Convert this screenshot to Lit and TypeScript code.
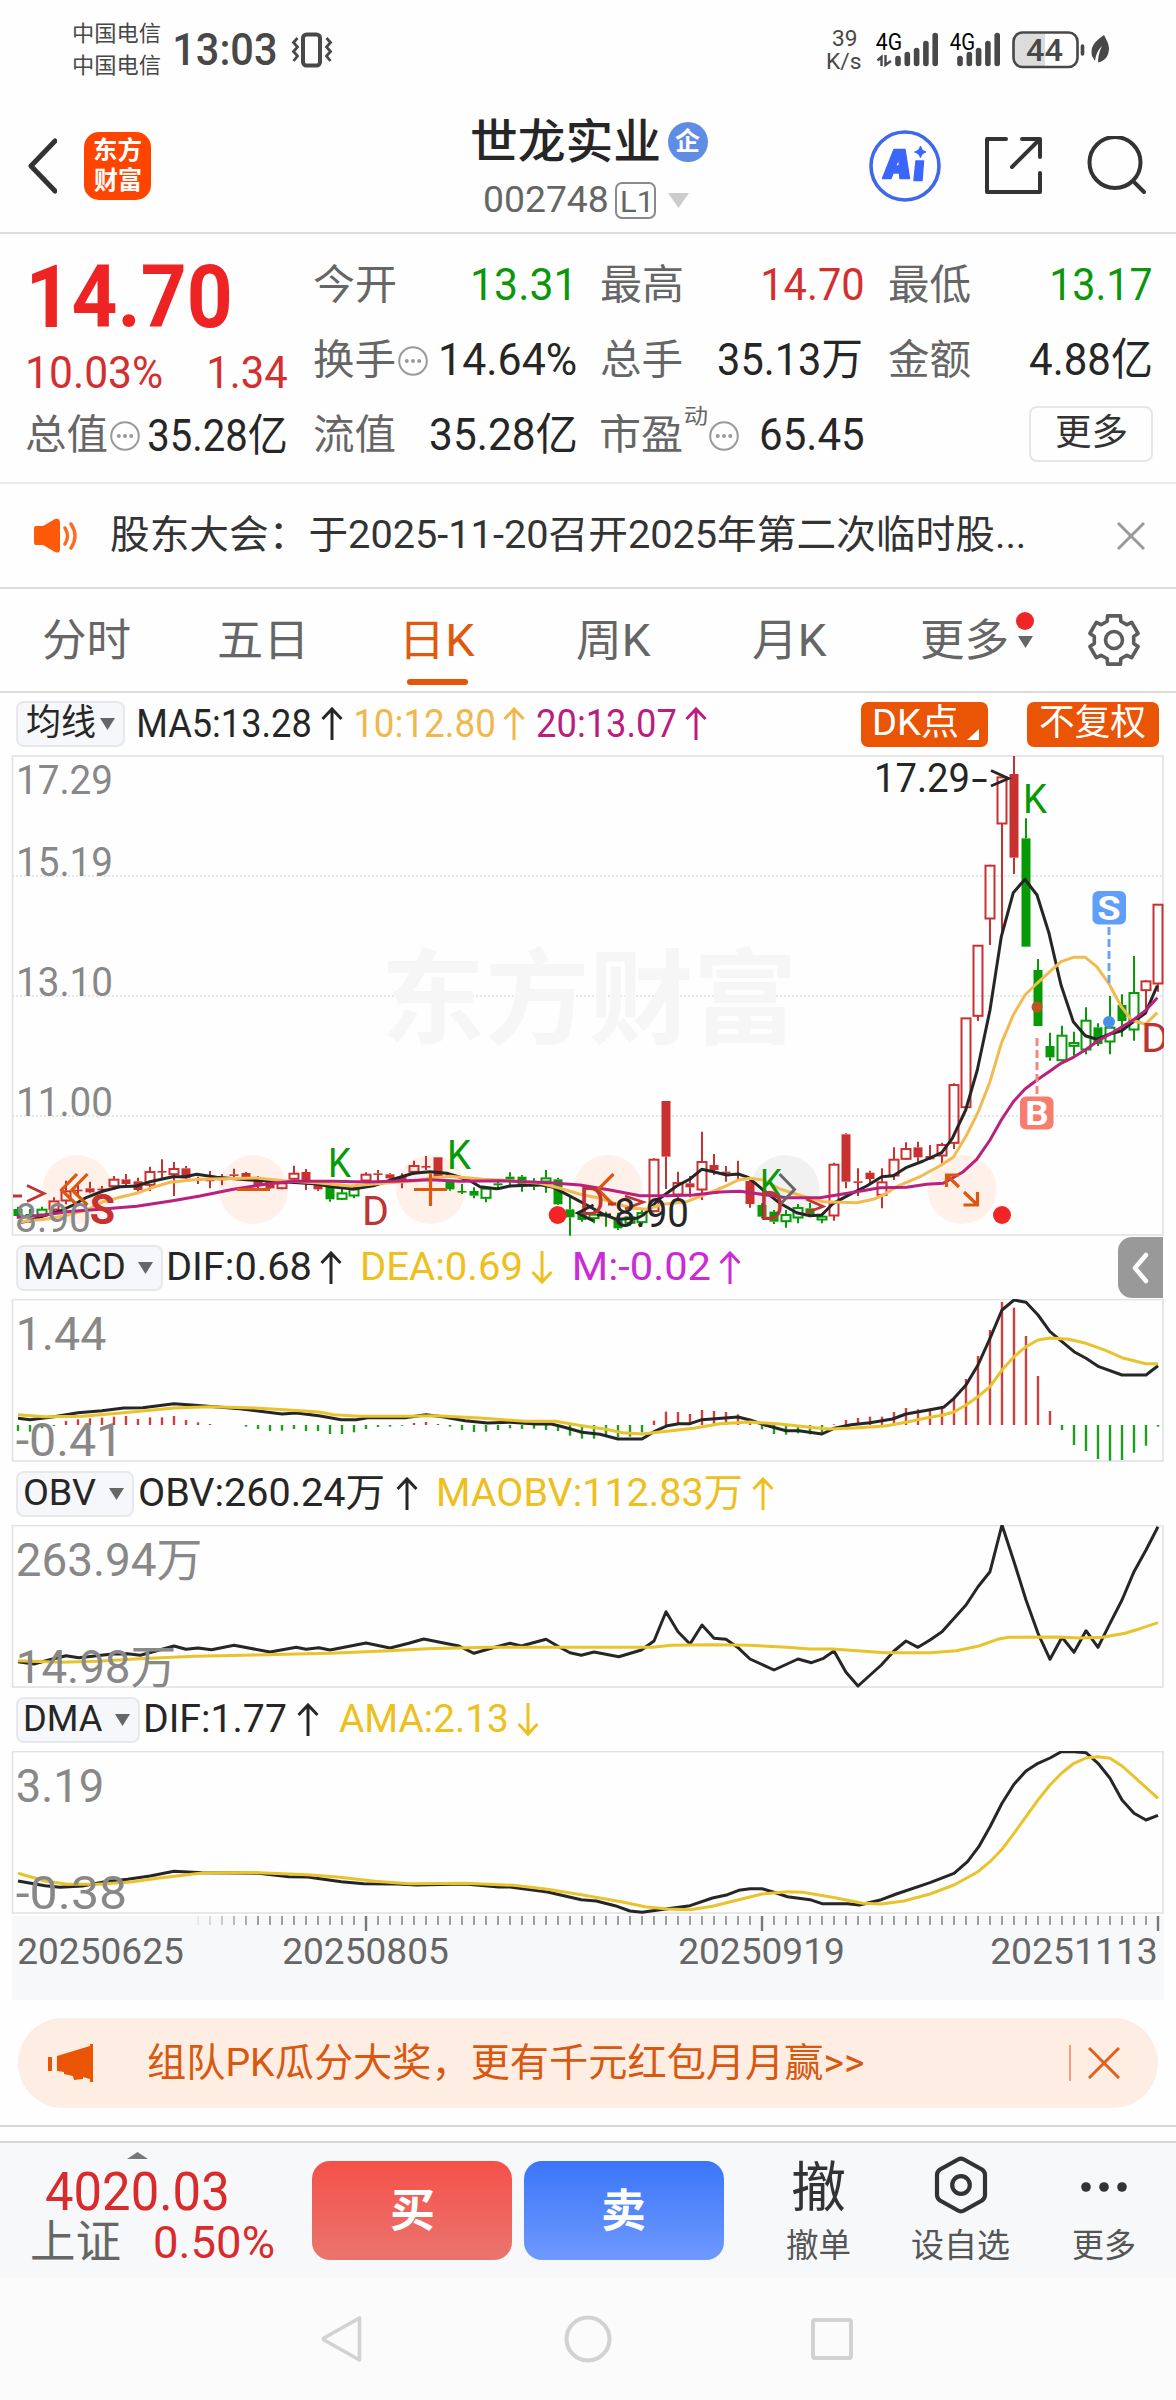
import { LitElement, html, svg, css } from "lit";
import { customElement, property } from "lit/decorators.js";

const FONT = css`Roboto, "Noto Sans CJK SC", sans-serif`;

/* A single line of text whose ink fills exactly `w` pixels. */
@customElement("fit-text")
export class FitText extends LitElement {
  @property({ type: Number }) w = 0;
  @property({ type: Number }) lead = 0;
  @property() text = "";

  static styles = css`
    :host { display: block; flex: none; white-space: nowrap; line-height: 1.2; }
    .ink { display: inline-block; transform-origin: 0 50%; vertical-align: top; }
  `;

  updated() {
    const ink = this.renderRoot.querySelector(".ink") as HTMLElement;
    const cs = getComputedStyle(this);
    const ctx = document.createElement("canvas").getContext("2d")!;
    ctx.font = `${cs.fontWeight} ${cs.fontSize} ${cs.fontFamily}`;
    const m = ctx.measureText(this.text);
    const natural = m.actualBoundingBoxLeft + m.actualBoundingBoxRight;
    const k = this.w / natural;
    ink.style.transform = `translateX(${m.actualBoundingBoxLeft * k}px) scaleX(${k})`;
    ink.style.width = `${this.w}px`;
    this.style.width = `${this.w}px`;
    if (this.lead) this.style.marginLeft = `${this.lead}px`;
  }

  render() {
    return html`<span class="ink">${this.text}</span>`;
  }
}

const tx = (text: string, w: number, cls = "", lead = 0) =>
  html`<fit-text class=${cls} .text=${text} .w=${w} .lead=${lead}></fit-text>`;

type Pt = [number, number];
const path = (pts: Pt[]) => "M" + pts.map(([x, y]) => `${x.toFixed(1)} ${y.toFixed(1)}`).join("L");
const place = (pts: Pt[], ox: number, oy: number, sx: number, sy: number): Pt[] =>
  pts.map(([x, y]) => [ox + x / sx, oy + y / sy]);
const A = (pts: Pt[]) => place(pts, 0, 1110, 3, 3);
const B = (pts: Pt[]) => place(pts, 500, 1080, 3, 3);
const C = (pts: Pt[]) => place(pts, 860, 740, 3, 3);
const M = (pts: Pt[]) => place(pts, 0, 1290, 4 / 3, 3);
const N = (pts: Pt[]) => place(pts, 0, 1640, 4 / 3, 3);

const label = (s: string, x1: number, x2: number, y: number, size: number, cls = "ax") => svg`
  <text class=${cls} x=${x1 - size * 0.05} y=${y} font-size=${size}
    textLength=${x2 - x1 + size * 0.1} lengthAdjust="spacingAndGlyphs">${s}</text>`;

/* kind, high, body top, body bottom, low; upper case = hollow body */
type Candle = [string, number, number, number, number];
const early: Candle[] = [
  ["g", 290, 297, 318, 325], ["g", 297, 312, 318, 338], ["G", 290, 297, 315, 320], ["R", 262, 272, 300, 305],
  ["R", 212, 242, 273, 283], ["r", 225, 239, 243, 255], ["r", 215, 235, 247, 250], ["r", 228, 236, 241, 248],
  ["R", 198, 207, 230, 240], ["r", 192, 208, 222, 228], ["r", 203, 214, 240, 245], ["R", 170, 184, 226, 243],
  ["r", 148, 183, 187, 205], ["R", 156, 175, 194, 258], ["r", 168, 175, 205, 208], ["r", 200, 207, 211, 222],
  ["r", 183, 209, 213, 235], ["r", 192, 206, 210, 226], ["r", 176, 193, 196, 208], ["r", 186, 189, 207, 212],
  ["r", 198, 207, 225, 235], ["r", 205, 215, 235, 237], ["R", 212, 218, 236, 238], ["R", 167, 189, 208, 213],
  ["r", 177, 186, 210, 240], ["r", 210, 225, 238, 243], ["g", 225, 230, 268, 275], ["G", 235, 248, 268, 270],
  ["G", 230, 236, 258, 265], ["R", 187, 192, 213, 217], ["r", 180, 190, 193, 212], ["r", 190, 193, 205, 212],
  ["r", 190, 200, 210, 235], ["R", 152, 166, 187, 195], ["r", 138, 168, 171, 180], ["r", 142, 142, 200, 200],
  ["g", 210, 215, 238, 242], ["g", 222, 243, 247, 252], ["g", 232, 243, 257, 265], ["G", 228, 234, 265, 277],
  ["g", 215, 220, 226, 236],
];
const middle: Candle[] = [
  ["g", 277, 290, 299, 315], ["g", 285, 290, 315, 335], ["g", 295, 315, 320, 330], ["G", 270, 293, 306, 338],
  ["g", 293, 298, 373, 375], ["g", 350, 388, 412, 467], ["g", 396, 400, 420, 425], ["G", 395, 402, 416, 430],
  ["g", 395, 403, 407, 440], ["g", 398, 420, 445, 450], ["G", 400, 410, 430, 437], ["G", 385, 397, 428, 432],
  ["R", 235, 237, 395, 397], ["r", 63, 63, 230, 327], ["R", 275, 307, 345, 360], ["r", 288, 310, 322, 352],
  ["R", 155, 244, 330, 360], ["r", 222, 255, 270, 285], ["r", 258, 275, 279, 305], ["r", 242, 282, 285, 297],
  ["r", 300, 303, 372, 383], ["g", 370, 375, 410, 415], ["g", 390, 395, 425, 432], ["G", 390, 403, 425, 443],
  ["G", 372, 382, 414, 430], ["g", 368, 385, 402, 410], ["G", 400, 408, 420, 430], ["R", 248, 252, 408, 422],
  ["r", 160, 163, 305, 325], ["r", 265, 304, 307, 348], ["r", 272, 278, 297, 312], ["R", 265, 305, 346, 385],
  ["R", 202, 237, 288, 300], ["R", 187, 205, 238, 240], ["r", 185, 202, 232, 245], ["r", 195, 228, 238, 240],
  ["R", 188, 193, 228, 255], ["R", 10, 13, 190, 207],
];
const late: Candle[] = [
  ["R", 833, 833, 1103, 1106], ["R", 615, 615, 829, 843], ["R", 374, 375, 537, 615], ["R", 108, 110, 252, 585],
  ["r", 48, 102, 353, 402], ["g", 235, 295, 620, 620], ["g", 657, 690, 858, 858], ["g", 878, 918, 952, 962],
  ["G", 857, 885, 962, 964], ["G", 875, 907, 919, 947], ["G", 802, 840, 930, 943], ["g", 850, 862, 912, 918],
  ["G", 768, 861, 906, 943], ["g", 763, 795, 843, 890], ["G", 648, 757, 870, 902], ["R", 720, 722, 752, 810],
  ["R", 492, 492, 732, 755],
];
const candles: Candle[] = [
  ...early.map(([k, ...v]) => [k, ...v.map((n) => 1110 + n / 3)] as Candle),
  ...middle.map(([k, ...v]) => [k, ...v.map((n) => 1080 + n / 3)] as Candle),
  ...late.map(([k, ...v]) => [k, ...v.map((n) => 740 + n / 3)] as Candle),
];

const drawCandle = ([k, hi, top, bot, lo]: Candle, i: number) => {
  const x = 18 + i * 12;
  const up = k.toLowerCase() === "r";
  const col = up ? "#c93030" : "#069a06";
  const hollow = k === k.toUpperCase();
  return svg`
    <path d="M${x} ${hi}V${top}M${x} ${bot}V${lo}" stroke=${col} stroke-width="2" fill="none"/>
    ${hollow
      ? svg`<rect x=${x - 4.5} y=${top + 0.7} width="9" height=${Math.max(bot - top - 1.2, 2)} fill="none" stroke=${col} stroke-width="2"/>`
      : svg`<rect x=${x - 4.5} y=${top} width="9" height=${Math.max(bot - top, 1.6)} fill=${col}/>`}`;
};

const ma5 = [
  ...A([[62,337],[90,332],[130,318],[180,303],[220,285],[260,262],[310,243],[360,230],[410,228],[450,215],[518,200],[555,200],[590,193],[650,202],[750,210],[850,215],[950,222],[1000,231],[1060,237],[1120,227],[1180,208],[1240,190],[1290,185],[1340,190],[1380,202],[1410,212],[1440,230],[1490,236]]),
  ...B([[0,325],[30,318],[120,314],[160,322],[200,343],[260,375],[310,403],[350,418],[410,415],[430,405],[480,355],[530,318],[570,297],[605,268],[640,275],[680,285],[715,282],[745,292],[790,330],[840,370],[890,398],[930,407],[965,405],[1000,370],[1060,338],[1100,318],[1145,290],[1180,287],[1220,262],[1270,243],[1325,218],[1357,175]]),
  ...C([[317,1110],[352,990],[390,810],[424,590],[460,458],[495,418],[531,465],[567,580],[603,735],[640,845],[676,887],[710,898],[750,882],[785,872],[820,845],[856,820],[892,737]]),
];
const ma10 = [
  ...A([[62,335],[140,327],[190,318],[260,300],[310,275],[360,262],[410,250],[450,235],[510,217],[600,208],[770,204],[850,212],[950,218],[1050,228],[1150,220],[1250,212],[1290,205],[1350,199],[1450,208]]),
  ...B([[0,300],[120,310],[180,325],[240,343],[300,355],[350,372],[400,385],[440,388],[490,373],[560,365],[620,342],[680,317],[715,300],[750,295],[790,300],[840,327],[890,343],[930,355],[970,365],[1070,368],[1120,358],[1150,345],[1190,320],[1260,290],[1320,257],[1360,232],[1400,165],[1435,95]]),
  ...C([[390,1025],[424,910],[460,825],[495,765],[531,730],[567,697],[603,665],[640,652],[676,652],[710,680],[746,730],[784,800],[815,840],[856,853],[892,818]]),
];
const ma20 = [
  ...A([[50,322],[130,316],[200,305],[300,298],[410,289],[518,272],[600,258],[700,238],[800,222],[880,214],[1000,214],[1100,216],[1200,213],[1290,209],[1380,214]]),
  ...B([[0,302],[150,308],[240,315],[330,330],[420,347],[500,347],[580,345],[660,336],[720,334],[800,345],[860,353],[960,353],[1010,345],[1070,335],[1140,323],[1220,322],[1280,313],[1330,310],[1390,275],[1430,238],[1470,180]]),
  ...C([[424,1140],[460,1085],[495,1047],[531,1020],[567,995],[603,970],[640,952],[676,930],[710,905],[750,882],[820,840],[856,812],[892,773]]),
];

const macdTips = [
  423,425,415,408,393,388,385,383,380,378,387,382,382,378,390,397,402,405,405,410,417,423,422,417,423,423,432,432,427,417,411,410,407,
  399,396,402,410,420,426,425,420,415,417,416,420,423,437,446,446,440,442,440,427,392,365,366,372,360,363,366,373,392,
  418,432,434,430,433,430,403,390,384,380,380,366,354,358,358,355,325,267,198,120,36,53,138,258,363,
  420,465,483,507,512,510,488,467,410,
];
const macdDif = M([[24,385],[40,389],[56,385],[72,380],[104,368],[136,362],[165,354],[190,353],[232,341],[260,346],[320,356],[376,372],[395,369],[425,377],[455,389],[475,389],[490,383],[540,383],[568,374],[590,380],[620,392],[650,399],[680,397],[715,402],[735,402],[750,410],[776,427],[800,433],[824,447],[856,447],[872,425],[890,407],[905,401],[920,401],[936,389],[984,381],[1000,390],[1020,405],[1048,422],[1065,422],[1096,432],[1112,415],[1135,404],[1160,398],[1190,387],[1208,372],[1240,359],[1258,352],[1272,325],[1288,285],[1304,225],[1320,145],[1336,60],[1352,30],[1368,37],[1384,75],[1400,125],[1432,185],[1448,205],[1465,230],[1496,255],[1528,255],[1544,227]]);
const macdDea = M([[24,374],[60,380],[110,379],[165,368],[232,354],[280,350],[340,354],[385,360],[425,366],[445,374],[480,379],[540,379],[580,377],[640,384],[700,394],[740,394],[776,407],[808,418],[830,428],[856,432],[880,426],[925,415],[960,401],[1000,396],[1040,402],[1080,412],[1105,417],[1140,414],[1180,408],[1208,397],[1240,382],[1256,376],[1272,366],[1288,345],[1304,320],[1320,290],[1336,240],[1352,200],[1368,170],[1384,150],[1400,144],[1425,148],[1448,160],[1475,182],[1496,203],[1528,221],[1544,221]]);
const obv = N([[24,65],[45,72],[65,60],[88,47],[105,53],[150,42],[170,41],[187,46],[232,18],[248,28],[264,24],[282,29],[312,16],[360,36],[395,22],[408,28],[425,23],[440,30],[488,9],[520,24],[545,10],[565,-3],[590,8],[612,18],[632,40],[655,25],[680,10],[695,18],[728,-2],[745,20],[760,38],[775,46],[792,36],[825,50],[855,30],[872,3],[888,-85],[904,-25],[920,12],[936,-45],[952,-5],[968,-2],[985,25],[1000,57],[1032,90],[1064,57],[1082,68],[1098,55],[1112,33],[1128,97],[1144,138],[1175,75],[1192,33],[1208,3],[1224,22],[1240,0],[1256,-25],[1288,-105],[1304,-160],[1320,-205],[1336,-345],[1352,-235],[1368,-120],[1384,-20],[1400,58],[1416,-8],[1432,37],[1448,-28],[1464,22],[1480,-50],[1496,-120],[1512,-205],[1528,-270],[1544,-340]]);
const maobv = N([[24,62],[80,67],[130,64],[185,56],[260,49],[340,45],[440,40],[520,32],[570,26],[650,22],[800,22],[870,22],[895,16],[950,14],[1000,16],[1050,22],[1080,27],[1110,27],[1180,38],[1240,38],[1275,32],[1305,18],[1330,-2],[1345,-8],[1410,-9],[1440,-6],[1470,-8],[1500,-20],[1520,-34],[1544,-52]]);
const dma = N([[24,723],[60,737],[80,742],[110,738],[140,725],[170,718],[200,708],[232,694],[270,698],[345,700],[385,710],[410,711],[455,725],[485,731],[530,732],[555,735],[620,732],[665,741],[680,741],[730,756],[775,779],[795,783],[820,797],[840,813],[856,817],[900,803],[920,797],[950,774],[970,764],[985,751],[1000,746],[1016,746],[1032,757],[1050,770],[1080,779],[1096,791],[1130,791],[1146,795],[1175,779],[1195,762],[1240,728],[1272,700],[1290,665],[1305,620],[1320,560],[1336,490],[1352,433],[1368,393],[1384,370],[1400,354],[1415,335],[1432,335],[1448,338],[1464,370],[1480,415],[1496,480],[1512,520],[1528,540],[1544,526]]);
const ama = N([[24,700],[60,723],[90,733],[130,733],[175,726],[210,715],[270,699],[345,698],[410,704],[450,711],[500,724],[545,731],[620,730],[685,736],[730,748],[775,764],[830,786],[860,800],[890,807],[920,809],[950,799],[985,779],[1016,762],[1050,755],[1070,757],[1110,772],[1150,790],[1175,792],[1205,783],[1240,762],[1272,735],[1304,695],[1320,665],[1336,628],[1352,580],[1384,480],[1400,435],[1416,398],[1432,370],[1448,354],[1464,350],[1480,355],[1496,378],[1512,410],[1544,475]]);

const stroke = (pts: Pt[], col: string) =>
  svg`<path d=${path(pts)} fill="none" stroke=${col} stroke-width="3" stroke-linejoin="round"/>`;
const frame = (y: number, h: number) =>
  svg`<rect x="12.5" y=${y} width="1150.5" height=${h} fill="none" stroke="#e2e2e2" stroke-width="1.6"/>`;

const arrow = (up: boolean, col: string, lead: number) => html`
  <svg class="arrow" width="22" height="34" viewBox="0 0 22 34" style="margin-left:${lead}px">
    <path d=${up ? "M11 33V1.5M1.5 12L11 2L20.5 12" : "M11 0V31.500M1.5 21L11 31L20.5 21"} fill="none" stroke=${col} stroke-width="3"/>
  </svg>`;
const caret = html`<svg class="caret" width="15" height="12" viewBox="0 0 15 12"><path d="M0 0H15L7.5 12Z" fill="#666"/></svg>`;
const dots = (lead: number) => html`
  <svg class="arrow" width="30" height="30" viewBox="0 0 30 30" style="margin-left:${lead}px">
    <circle cx="15" cy="15" r="13.8" fill="none" stroke="#999" stroke-width="2"/>
    <g fill="#999"><circle cx="8.8" cy="15" r="2"/><circle cx="15" cy="15" r="2"/><circle cx="21.2" cy="15" r="2"/></g>
  </svg>`;

const gear = (() => {
  const pts: Pt[] = [];
  for (let i = 0; i < 6; i++) {
    const c = -90 + i * 60;
    for (const [d, r] of [[-20, 20], [-15, 25], [15, 25], [20, 20]] as Pt[]) {
      const a = ((c + d) * Math.PI) / 180;
      pts.push([27 + r * Math.cos(a), 27 + r * Math.sin(a)]);
    }
  }
  return path(pts) + "Z";
})();

@customElement("app-root")
export class AppRoot extends LitElement {
  static styles = css`
    :host { display: block; width: 1176px; height: 2400px; background: #fefefe; font-family: ${FONT}; color: #262626; overflow: hidden; }
    * { box-sizing: border-box; }
    svg { display: block; flex: none; }
    .row { display: flex; align-items: center; }
    .dim { color: #666; }
    .red { color: #d42f2f; }
    .green { color: #0c960c; }

    .status { display: flex; align-items: center; height: 100px; padding-left: 74px; color: #484848; }
    .carriers { display: flex; flex-direction: column; gap: 6px; font-size: 22px; line-height: 27px; }
    .clock { font-size: 45px; font-weight: 500; }
    .net { display: flex; flex-direction: column; align-items: center; gap: 0; margin-left: 494px; font-size: 22px; }
    .net fit-text { line-height: 23px; }
    .sys { margin-left: 15px; }

    .head { display: grid; grid-template-columns: 1fr auto 1fr; height: 134px; border-bottom: 2px solid #dcdcdc; }
    .left { display: flex; align-items: center; padding-left: 27px; gap: 27px; }
    .logo { display: flex; flex-direction: column; align-items: center; justify-content: center; gap: 2px; width: 67px; height: 68px; border-radius: 15px; background: #ff4400; color: #fff; font-size: 25px; font-weight: 700; }
    .logo fit-text { line-height: 28px; }
    .title { display: flex; flex-direction: column; align-items: center; padding-top: 14px; }
    .name { font-size: 47px; font-weight: 500; margin-left: 3px; }
    .badge { display: grid; place-items: center; width: 40px; height: 40px; margin-left: 9px; border-radius: 50%; background: #5f8de6; color: #fff; font-size: 25px; font-weight: 700; }
    .code { height: 40px; margin-top: 10px; margin-right: 3px; font-size: 37px; color: #666; }
    .lv { display: grid; place-items: center; width: 41px; height: 37px; margin: 0 12px 0 8px; border: 2px solid #8a8a8a; border-radius: 7px; font-size: 30px; }
    .tools { display: flex; align-items: center; justify-content: flex-end; padding-right: 29px; gap: 43px; }

    .quote { display: grid; grid-template-columns: 262px 262px 262px 262px; column-gap: 25.5px; height: 250px; padding: 14px 0 0 26px; border-bottom: 2px solid #ececec; font-size: 44px; }
    .col { display: grid; grid-template-rows: 75px 75px 75px; }
    .cell { display: flex; align-items: center; }
    .cell .lab { font-size: 41px; color: #666; }
    .push { margin-left: auto; }
    .main { display: grid; grid-template-rows: 99px 52px 74px; }
    .price { font-size: 87px; font-weight: 700; color: #ee2424; }
    .sup { font-size: 21px; align-self: flex-start; margin-top: 6px; color: #666; }
    .more { display: grid; place-items: center; width: 124px; height: 56px; margin: -4px -2px 0 auto; border: 2px solid #e6e6e6; border-radius: 8px; font-size: 36px; color: #333; }

    .notice { display: flex; align-items: center; height: 105px; padding: 0 30px 0 33px; border-bottom: 2px solid #dcdcdc; font-size: 39px; color: #333; }
    .notice .x { margin-left: auto; }

    .tabs { display: flex; align-items: center; height: 104px; padding: 3px 0 0 43px; border-bottom: 2px solid #dcdcdc; font-size: 44px; color: #666; }
    .tab { position: relative; display: grid; }
    .on { color: #e0590f; }
    .bar { position: absolute; left: 1px; bottom: -17px; width: 61px; height: 6px; border-radius: 3px; background: #e6540a; }
    .flag { display: flex; flex-direction: column; align-items: center; gap: 6px; margin-left: 9px; padding-bottom: 23px; }
    .flag i { width: 18px; height: 18px; border-radius: 50%; background: #f02525; }
    .gear { margin: -3px 0 0 53px; }

    .legend { display: flex; align-items: center; height: 63px; padding-left: 16px; font-size: 39px; }
    .legend.first { height: 62px; }
    .chip { display: flex; align-items: center; justify-content: space-between; height: 46px; margin-right: 6px; padding: 0 8px 0 7px; border: 2px solid #e6e8ec; border-radius: 8px; background: #f6f7fa; font-size: 36px; }
    .c0 { width: 109px; margin-right: 14px; padding-left: 9px; } .c0 fit-text { font-size: 36px; }
    .c1 { width: 147px; } .c2 { width: 118px; } .c3 { width: 124px; }
    .tag { position: relative; display: flex; align-items: center; height: 45px; border-radius: 7px; background: #e95405; color: #fff; font-size: 36px; }
    .dk { width: 127px; padding-left: 13px; margin-left: 154px; }
    .dk svg { margin: 20px 0 0 9px; }
    .fq { width: 132px; padding-left: 13px; margin-left: 39px; }
    .fold { display: grid; place-items: center; width: 45px; height: 61px; margin: 0 13px 0 auto; padding-right: 2px; border-radius: 14px 0 0 14px; background: #999; }
    .ma10 { color: #f0b84c; } .ma20 { color: #b91d7d; } .gold { color: #edc01e; } .mag { color: #cb2bd6; }

    text { font-family: ${FONT}; }
    .ax { fill: #888; }
    .wm { fill: #f6f6f6; font-weight: 700; }
    .k { fill: #069a06; } .d { fill: #bd3434; } .s { fill: #c93030; font-weight: 700; } .blk { fill: #262626; }
    .w { fill: #fff; font-weight: 700; } .dt { fill: #666; }

    .axis { height: 86px; }
    .promo { display: flex; align-items: center; height: 90px; margin: 18px 18px 0; padding: 0 38px 0 29px; border-radius: 45px; background: #fdede3; color: #d9580f; font-size: 39px; }
    .promo .sep { width: 2px; height: 36px; margin: 0 17px 0 auto; background: #e9a27c; }
    .gap { height: 18px; margin-top: 17px; border-top: 2px solid #d8d8dc; border-bottom: 2px solid #d8d8dc; }
    .dock { display: flex; height: 135px; background: #f6f8fa; }
    .index { display: flex; flex-direction: column; width: 312px; padding-top: 9px; }
    .index .up { margin-left: 127px; }
    .idx { font-size: 53px; line-height: 54px; margin-top: 6px; color: #d92b2b; }
    .sub { display: flex; align-items: center; margin-left: 32px; height: 48px; font-size: 45px; }
    .sub fit-text { line-height: 48px; }
    .sub .red { color: #d92b2b; }
    .btn { display: grid; place-items: center; width: 200px; height: 99px; margin-top: 18px; padding-top: 3px; border-radius: 18px; color: #fff; font-size: 45px; font-weight: 700; }
    .buy { background: linear-gradient(#f5514a, #ea756e); }
    .sell { margin-left: 12px; background: linear-gradient(#3b76f8, #6e99fe); }
    .acts { display: grid; grid-template-columns: 142px 143px 143px; margin-left: 23px; }
    .act { display: flex; flex-direction: column; align-items: center; font-size: 33px; color: #555; }
    .act .top { display: grid; place-items: center; height: 83px; color: #333; font-size: 54px; }
    .act .word { padding-top: 9px; }
    .nav { display: flex; align-items: center; height: 122px; padding-left: 320px; background: #fbfbfb; }
    .nav .n2 { margin-left: 201px; } .nav .n3 { margin-left: 198px; }
  `;

  cell(lab: string, val: string, w: number, cls = "", extra: unknown = "", inset = 0) {
    return html`<div class="cell">
      ${tx(lab, 81, "lab")}${extra}
      <span class="push" style="margin-right:${inset}px">${tx(val, w, cls)}</span>
    </div>`;
  }

  signal(x: number) {
    const tops = [56, 52, 48, 41, 33];
    return tops.map((t, i) => svg`<path d="M${x + i * 9.3} ${t + 2.5}V63.5" stroke="#484848" stroke-width="5.6" stroke-linecap="round"/>`);
  }

  statusBar() {
    return html`<div class="status">
      <div class="carriers">${tx("中国电信", 86)}${tx("中国电信", 86)}</div>
      ${tx("13:03", 101, "clock", 15)}
      <svg width="42" height="36" viewBox="0 0 42 36" style="margin-left:15px">
        <rect x="12" y="2.5" width="17" height="31" rx="3.5" fill="none" stroke="#484848" stroke-width="4"/>
        <path d="M6.5 6L2.5 10.5L6.5 15L2.5 19.5L6.5 24L2.5 29M35.500 6L39.500 10.500L35.500 15L39.500 19.500L35.500 24L39.500 29" fill="none" stroke="#484848" stroke-width="2.8"/>
      </svg>
      <div class="net">${tx("39", 23)}${tx("K/s", 34)}</div>
      <svg class="sys" width="236" height="50" viewBox="876 25 236 50">
        ${label("4G", 877, 901, 50, 23, "st")}
        ${label("4G", 951, 974, 50, 23, "st")}
        <path d="M881.500 66V57L877.500 60.500M885.500 55V65L891 61" fill="none" stroke="#484848" stroke-width="2.4"/>
        ${this.signal(898)}${this.signal(960)}
        <path d="M1045 33.500V66H1023Q1014 66 1014 57V42Q1014 33.500 1023 33.500Z" fill="#dcdcdc"/>
        <rect x="1013.500" y="32.500" width="64" height="34.500" rx="9" fill="none" stroke="#484848" stroke-width="2.6"/>
        <text x="1026" y="61" font-size="32" font-weight="500" fill="#484848" textLength="37" lengthAdjust="spacingAndGlyphs">44</text>
        <path d="M1082.500 46V54" stroke="#484848" stroke-width="3.600" stroke-linecap="round"/>
        <path d="M1104 35C1094 42 1090 47 1092 56L1095 61C1096 54 1098 50 1102 46C1099 52 1098 57 1098 62.500C1106 61 1109 55 1109 48C1108.500 43 1106.500 40 1104 35Z" fill="#484848"/>
      </svg>
    </div>`;
  }

  header() {
    return html`<div class="head">
      <div class="left">
        <svg width="30" height="56" viewBox="0 0 30 56"><path d="M28 3L4 28L28 53" fill="none" stroke="#333" stroke-width="5" stroke-linejoin="round" stroke-linecap="round"/></svg>
        <div class="logo">${tx("东方", 47)}${tx("财富", 47)}</div>
      </div>
      <div class="title">
        <div class="row">${tx("世龙实业", 187, "name", 3)}<span class="badge">${tx("企", 25)}</span></div>
        <div class="row code">${tx("002748", 122)}<span class="lv">${tx("L1", 26)}</span>
          <svg width="21" height="15" viewBox="0 0 21 15"><path d="M0 0H21L10.500 15Z" fill="#ccc"/></svg></div>
      </div>
      <div class="tools">
        <svg width="72" height="72" viewBox="868.500 130.500 72 72">
          <circle cx="904.500" cy="166.500" r="34" fill="none" stroke="#4068e8" stroke-width="3.600"/>
          <path d="M882 179L893.500 150H904.500L909 179H899.500L899 173.500H892.500L890.500 179ZM895 166.500H898.800L898.500 158.500Z" fill="#3a66fb" stroke="#3a66fb" stroke-width="1.500" stroke-linejoin="round"/>
          <path d="M915.500 161.500H923L921.500 181H913.500Z" fill="#3a66fb" stroke="#3a66fb" stroke-width="1.500" stroke-linejoin="round"/>
          <path d="M920 146.500Q921 151.500 925.500 152.500Q921 153.500 920 158Q919 153.500 914 152.500Q919 151.500 920 146.500Z" fill="#3a66fb" stroke="#3a66fb" stroke-width="1.200"/>
        </svg>
        <svg width="60" height="60" viewBox="983 137 60 60" fill="none" stroke="#333" stroke-width="4" stroke-linecap="round" stroke-linejoin="round">
          <path d="M1005 140H986V193H1039V174M1021 140H1039V158M1038 141L1011 168"/>
        </svg>
        <svg width="60" height="60" viewBox="1087 137 60 60" fill="none" stroke="#333" stroke-width="4" stroke-linecap="round">
          <circle cx="1115" cy="163.500" r="25.500"/><path d="M1134 183L1144 193"/>
        </svg>
      </div>
    </div>`;
  }

  quote() {
    return html`<div class="quote">
      <div class="main">
        <div class="cell">${tx("14.70", 197, "price", 6)}</div>
        <div class="cell">${tx("10.03%", 134, "red", 2)}${tx("1.34", 78, "red", 47)}</div>
        <div class="cell">${tx("总值", 81, "lab", 0)}${dots(3)}${tx("35.28亿", 137, "", 9)}</div>
      </div>
      <div class="col">
        ${this.cell("今开", "13.31", 96, "green", "", 7)}
        ${this.cell("换手", "14.64%", 135, "", dots(3))}
        ${this.cell("流值", "35.28亿", 145)}
      </div>
      <div class="col">
        ${this.cell("最高", "14.70", 100, "red")}
        ${this.cell("总手", "35.13万", 142, "", "", 2)}
        ${this.cell("市盈", "65.45", 102, "", html`${tx("动", 22, "sup", 3)}${dots(2)}`)}
      </div>
      <div class="col">
        ${this.cell("最低", "13.17", 99, "green")}
        ${this.cell("金额", "4.88亿", 121)}
        <div class="cell"><span class="more">${tx("更多", 70)}</span></div>
      </div>
    </div>`;
  }

  tabs() {
    return html`<div class="tabs">
      ${tx("分时", 87)}${tx("五日", 83, "", 89)}
      <div class="tab on" style="margin-left:104px">${tx("日K", 69)}<i class="bar"></i></div>
      ${tx("周K", 74, "", 102)}${tx("月K", 74, "", 102)}${tx("更多", 85, "", 95)}
      <div class="flag"><i></i>${caret}</div>
      <svg class="gear" width="54" height="54" viewBox="0 0 54 54" fill="none" stroke="#5c5c5c" stroke-width="3.600" stroke-linejoin="round">
        <path d=${gear}/><circle cx="27" cy="27" r="8.500"/>
      </svg>
    </div>`;
  }

  mainChart() {
    const grid = [876, 996, 1116];
    const discs = [77, 253.500, 430.700, 608, 785, 962];
    return html`<svg width="1164" height="481" viewBox="0 755 1164 481">
      ${grid.map((y) => svg`<path d="M12 ${y}H1163" stroke="#dedede" stroke-width="1.500" stroke-dasharray="2 2"/>`)}
      ${label("东方财富", 386, 792, 1036, 103, "wm")}
      ${frame(756, 479)}
      ${discs.map((x, i) => svg`<circle cx=${x} cy="1189.500" r="34.500" fill=${i === 4 ? "#f1f1f1" : "#fff0e9"}/>`)}
      ${candles.map(drawCandle)}
      ${stroke(ma5, "#262626")}${stroke(ma10, "#f2bb50")}${stroke(ma20, "#b9207f")}
      <g fill="none" stroke="#d9590f" stroke-width="3.200">
        <path d="M77 1174L61.500 1190L77 1205M87.500 1174L72 1190L87.500 1205"/>
        <path d="M237 1189.500H270M414 1189.500H447M430.500 1173.500V1206"/>
        <path d="M613.500 1174L598 1189.500L613.500 1205"/>
        <path d="M946.500 1187V1175H959M946.500 1175L959 1187M977.500 1192V1205H963.500M977.500 1205L964 1192"/>
      </g>
      <path d="M779.500 1174L794.500 1189.500L779.500 1205" fill="none" stroke="#666" stroke-width="3"/>
      ${label("K", 330, 349, 1177, 40, "k")}${label("K", 449, 469, 1169, 40, "k")}
      ${label("K", 762, 780, 1197, 38, "k")}${label("K", 1025, 1045, 813, 40, "k")}
      ${label("D", 364, 387, 1225, 40, "d")}${label("D", 581, 603, 1215, 38, "d")}
      ${label("D", 761, 782, 1220, 40, "d")}${label("D", 1143, 1167, 1052, 40, "d")}
      ${label("S", 92, 113, 1224, 43, "s")}
      <g fill="none" stroke="#c23434" stroke-width="2.800">
        <path d="M13 1196H22M27 1185.500L44 1193.500L27 1201.500"/>
        <path d="M608 1204H616M625 1196L643 1202L625 1209M806 1199L823 1206.500L806 1213"/>
      </g>
      <g fill="none" stroke="#262626" stroke-width="2.800">
        <path d="M593.500 1205L577.500 1213L593.500 1221M597 1215H611"/>
        <path d="M972.500 780.500H986.500M991 770.500L1008.500 778.500L991 786"/>
      </g>
      <circle cx="557.700" cy="1215" r="9" fill="#f32424"/><circle cx="1002" cy="1215" r="9" fill="#f32424"/>
      ${label("8.90", 616, 687, 1227, 40, "blk")}${label("17.29", 876, 968, 792, 40, "blk")}
      ${label("17.29", 18, 111, 794, 40)}${label("15.19", 18, 111, 876, 40)}${label("13.10", 18, 111, 996, 40)}
      ${label("11.00", 18, 111, 1116, 40)}${label("8.90", 17, 89, 1232, 40)}
      <path d="M1037 1038V1095" stroke="#f2897c" stroke-width="3" stroke-dasharray="8 4"/>
      <path d="M1109 927V984" stroke="#6aa4f0" stroke-width="3" stroke-dasharray="8 4"/>
      <circle cx="1037" cy="1007" r="5.500" fill="#bf5420"/><circle cx="1109" cy="1022" r="6" fill="#4690ea"/>
      <rect x="1020" y="1096.500" width="33.500" height="33" rx="6" fill="#f87d6e"/>${label("B", 1027, 1047, 1125, 34, "w")}
      <rect x="1092.500" y="891" width="33.500" height="33.500" rx="6" fill="#5f9ffa"/>${label("S", 1099, 1119, 920, 34, "w")}
    </svg>`;
  }

  macdChart() {
    return html`<svg width="1164" height="163" viewBox="0 1299 1164 163">
      ${frame(1299.500, 161.500)}
      ${macdTips.map((v, i) => v === 405 ? "" : svg`<path d="M${18 + 12 * i} 1425V${1290 + v / 3}" stroke=${v < 405 ? "#cc4040" : "#1ea01e"} stroke-width="2.400"/>`)}
      ${stroke(macdDif, "#262626")}${stroke(macdDea, "#e8c32c")}
      ${label("1.44", 18, 104, 1350, 46)}${label("-0.41", 18, 121, 1456, 46)}
    </svg>`;
  }

  linePanel(y: number, a: Pt[], b: Pt[], hi: [string, number], lo: [string, number]) {
    return html`<svg width="1164" height="163" viewBox="0 ${y} 1164 163">
      ${frame(y + 0.500, 161.500)}
      ${stroke(a, "#262626")}${stroke(b, "#e8c32c")}
      ${label(hi[0], 18, hi[1], y + 50.500, 46)}${label(lo[0], 18, lo[1], y + 157.500, 46)}
    </svg>`;
  }

  axis() {
    const ticks = Array.from({ length: 81 }, (_, k) => k + 15);
    return html`<svg class="axis" width="1164" height="86" viewBox="0 1914 1164 86">
      <rect x="12" y="1916" width="1152" height="84" fill="#f7f8fa"/>
      ${ticks.map((i) => {
        const major = i === 29 || i === 62 || i === 95;
        const x = 18 + 12 * i;
        return svg`<path d="M${x} 1916V${major ? 1931 : 1925}" stroke=${major ? "#777" : "#888"} stroke-width=${major ? 2.400 : 1.600} opacity=${Math.min(1, (i - 14) / 6)}/>`;
      })}
      ${label("20250625", 19, 182, 1964, 37, "dt")}${label("20250805", 284, 447, 1964, 37, "dt")}
      ${label("20250919", 680, 843, 1964, 37, "dt")}${label("20251113", 992, 1156, 1964, 37, "dt")}
    </svg>`;
  }

  render() {
    return html`
      ${this.statusBar()}${this.header()}${this.quote()}
      <div class="notice">
        <svg width="45" height="36" viewBox="33 516 45 36">
          <path d="M34 526Q34 524 36 524H43L55 517Q60 516 60 521V547Q60 552 55 550L43 543H36Q34 543 34 541Z" fill="#ff5a0a"/>
          <path d="M65 526Q70 534 65 542M71 522Q79 534 71 546" fill="none" stroke="#ff6a20" stroke-width="3.400" stroke-linecap="round"/>
        </svg>
        ${tx("股东大会：于2025-11-20召开2025年第二次临时股...", 913, "", 33)}
        <svg class="x" width="30" height="30" viewBox="0 0 30 30"><path d="M2 2L28 28M28 2L2 28" stroke="#999" stroke-width="3"/></svg>
      </div>
      ${this.tabs()}
      <div class="legend first">
        <span class="chip c0">${tx("均线", 68)}${caret}</span>
        ${tx("MA5:13.28", 171)}${arrow(true, "#262626", 11)}
        ${tx("10:12.80", 138, "ma10", 13)}${arrow(true, "#f0b84c", 9)}
        ${tx("20:13.07", 139, "ma20", 12)}${arrow(true, "#b91d7d", 9)}
        <span class="tag dk">${tx("DK点", 84)}<svg width="12" height="11" viewBox="0 0 12 11"><path d="M12 0V11H0Z" fill="#fff"/></svg></span>
        <span class="tag fq">${tx("不复权", 105)}</span>
      </div>
      ${this.mainChart()}
      <div class="legend">
        <span class="chip c1">${tx("MACD", 99)}${caret}</span>
        ${tx("DIF:0.68", 141)}${arrow(true, "#262626", 10)}
        ${tx("DEA:0.69", 158, "gold", 21)}${arrow(false, "#edc01e", 10)}
        ${tx("M:-0.02", 135, "mag", 22)}${arrow(true, "#cb2bd6", 9)}
        <span class="fold"><svg width="18" height="32" viewBox="0 0 18 32"><path d="M15 3L4 16L15 29" fill="none" stroke="#fff" stroke-width="4.500" stroke-linecap="round" stroke-linejoin="round"/></svg></span>
      </div>
      ${this.macdChart()}
      <div class="legend">
        <span class="chip c2">${tx("OBV", 71)}${caret}</span>
        ${tx("OBV:260.24万", 243)}${arrow(true, "#262626", 13)}
        ${tx("MAOBV:112.83万", 302, "gold", 21)}${arrow(true, "#edc01e", 11)}
      </div>
      ${this.linePanel(1525, obv, maobv, ["263.94万", 200], ["14.98万", 174])}
      <div class="legend">
        <span class="chip c3">${tx("DMA", 78)}${caret}</span>
        ${tx("DIF:1.77", 140)}${arrow(true, "#262626", 11)}
        ${tx("AMA:2.13", 168, "gold", 20)}${arrow(false, "#edc01e", 10)}
      </div>
      ${this.linePanel(1751, dma, ama, ["3.19", 102], ["-0.38", 125])}
      ${this.axis()}
      <div class="promo">
        <svg width="47" height="40" viewBox="47 2042 47 40"><path d="M48 2056H52V2070H48ZM57 2055L90 2045V2043H93V2081H90V2078L83 2076V2078L74 2079L73 2075L64 2073V2071L57 2070Z" fill="#ea5505"/></svg>
        ${tx("组队PK瓜分大奖，更有千元红包月月赢>>", 715, "", 54)}
        <i class="sep"></i>
        <svg width="32" height="32" viewBox="0 0 32 32"><path d="M1 1L31 31M31 1L1 31" stroke="#e0601c" stroke-width="3"/></svg>
      </div>
      <div class="gap"></div>
      <div class="dock">
        <div class="index">
          <svg class="up" width="21" height="7" viewBox="0 0 21 7"><path d="M0 7L10.500 0L21 7Z" fill="#777"/></svg>
          ${tx("4020.03", 181, "idx", 46)}
          <div class="sub">${tx("上证", 88, "dim")}${tx("0.50%", 118, "red", 35)}</div>
        </div>
        <div class="btn buy">${tx("买", 42)}</div>
        <div class="btn sell">${tx("卖", 42)}</div>
        <div class="acts">
          <div class="act"><span class="top word">${tx("撤", 52)}</span>${tx("撤单", 63)}</div>
          <div class="act"><span class="top">
            <svg width="56" height="60" viewBox="0 0 56 60" fill="none" stroke="#333" stroke-width="4.200" stroke-linejoin="round">
              <path d="M25 4.500Q28 2.800 31 4.500L49 14.500Q52 16.500 52 20V40Q52 43.500 49 45.500L31 55.500Q28 57.200 25 55.500L7 45.500Q4 43.500 4 40V20Q4 16.500 7 14.500Z"/><circle cx="28" cy="30" r="8.800"/>
            </svg></span>${tx("设自选", 97)}</div>
          <div class="act"><span class="top">
            <svg width="46" height="12" viewBox="0 0 46 12" fill="#333" style="margin-top:5px"><circle cx="5" cy="6" r="4.800"/><circle cx="23" cy="6" r="4.800"/><circle cx="41" cy="6" r="4.800"/></svg>
          </span>${tx("更多", 62)}</div>
        </div>
      </div>
      <div class="nav">
        <svg width="43" height="48" viewBox="0 0 43 48"><path d="M39.500 3V45L4 25Q3 24 4 23Z" fill="none" stroke="#d2d2d2" stroke-width="3.600" stroke-linejoin="round"/></svg>
        <svg class="n2" width="48" height="48" viewBox="0 0 48 48"><circle cx="24" cy="24" r="21.500" fill="none" stroke="#d2d2d2" stroke-width="4"/></svg>
        <svg class="n3" width="44" height="44" viewBox="0 0 44 44"><rect x="3" y="3" width="38" height="38" rx="2" fill="none" stroke="#d2d2d2" stroke-width="4"/></svg>
      </div>
    `;
  }
}
